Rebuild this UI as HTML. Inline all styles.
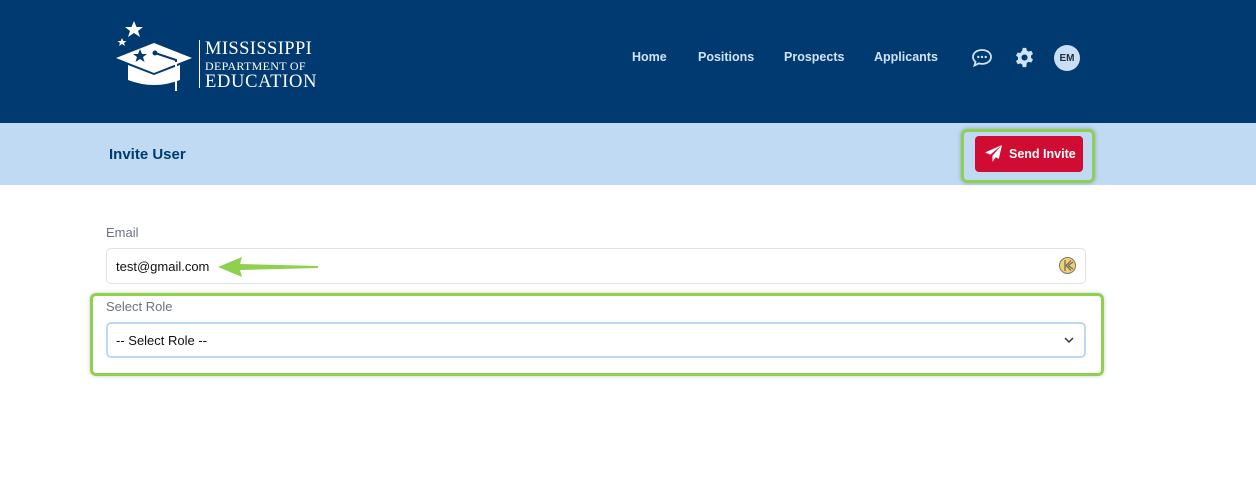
<!DOCTYPE html>
<html><head><meta charset="utf-8"><style>
*{box-sizing:border-box;margin:0;padding:0}
body{width:1256px;height:490px;background:#fff;font-family:"Liberation Sans",sans-serif;position:relative;overflow:hidden}
.hdr{position:absolute;left:0;top:0;width:1256px;height:123px;background:#003a70}
.nav a{position:absolute;top:50px;color:#cfe3f7;font-weight:bold;font-size:12.5px;text-decoration:none}
.sub{position:absolute;left:0;top:123px;width:1256px;height:62px;background:#bfdaf2}
.lbl{position:absolute;color:#6b7280;font-size:13px}
</style></head><body>
<div class="hdr">
<svg style="position:absolute;left:112px;top:18px" width="90" height="75" viewBox="0 0 90 75">
<polygon fill="#fff" points="22,3 24.5,9 31,9 26,13 28,19 22,15 16,19 18,13 13,9 19.5,9"/>
<polygon fill="#fff" points="10,20 11.3,23 14.5,23 12,25 13,28 10,26 7,28 8,25 5.5,23 8.7,23"/>
<polygon fill="#fff" points="4,40 42,25 80,40 42,55"/>
<path fill="#fff" d="M16,47 L16,62 Q42,72 68,62 L68,47 L42,57 Z"/>
<polygon fill="#003a70" points="28,31 30,36 35,36 31,39 32.5,44 28,41 23.5,44 25,39 21,36 26,36"/>
<path d="M43,35 L64,42 L64,73" stroke="#003a70" stroke-width="2" fill="none"/>
<path d="M64,44 L64,73" stroke="#fff" stroke-width="2"/>
<circle cx="43" cy="35" r="2.5" fill="#003a70"/>
</svg>
<div style="position:absolute;left:199px;top:40px;width:1px;height:48px;background:#fff"></div>
<div style="position:absolute;left:205px;top:40px;color:#fff;font-family:'Liberation Serif',serif;line-height:1">
<div style="font-size:18.5px;letter-spacing:0.4px">MISSISSIPPI</div>
<div style="font-size:12px;margin-top:1px;letter-spacing:0.3px">DEPARTMENT OF</div>
<div style="font-size:18.5px;margin-top:1px;letter-spacing:0.7px">EDUCATION</div>
</div>
<div class="nav"><a style="left:632px">Home</a><a style="left:698px">Positions</a><a style="left:784px">Prospects</a><a style="left:874px">Applicants</a></div>
<svg style="position:absolute;left:971px;top:48px" width="22" height="20" viewBox="0 0 22 20"><path d="M11,2 C5.5,2 2,5.3 2,9 C2,11 3,12.6 4.5,13.8 L3.5,17.5 L7.8,15.4 C8.8,15.7 9.9,15.9 11,15.9 C16.5,15.9 20,12.7 20,9 C20,5.3 16.5,2 11,2 Z" fill="none" stroke="#cfe3f7" stroke-width="1.8"/><circle cx="7.3" cy="9" r="1.2" fill="#cfe3f7"/><circle cx="11" cy="9" r="1.2" fill="#cfe3f7"/><circle cx="14.7" cy="9" r="1.2" fill="#cfe3f7"/></svg>
<svg style="position:absolute;left:1014px;top:47px" width="21" height="21" viewBox="0 0 24 24"><path fill="#cfe3f7" fill-rule="evenodd" d="M10,1 h4 l0.6,3 a8,8 0 0 1 2.2,1.3 l2.9-1 2,3.5-2.3,2 a8,8 0 0 1 0,2.5 l2.3,2-2,3.5-2.9-1 a8,8 0 0 1-2.2,1.3 L14,23 h-4 l-0.6-3 a8,8 0 0 1-2.2-1.3 l-2.9,1-2-3.5 2.3-2 a8,8 0 0 1 0-2.5 l-2.3-2 2-3.5 2.9,1 A8,8 0 0 1 9.4,4 Z M12,8.5 a3.5,3.5 0 1 0 0.01,0 Z"/></svg>
<div style="position:absolute;left:1054px;top:45px;width:26px;height:26px;border-radius:50%;background:#c8dff5;color:#1f2d3d;font-size:10px;font-weight:bold;text-align:center;line-height:27px">EM</div>
</div>
<div class="sub">
<div style="position:absolute;left:109px;top:23px;color:#003a70;font-weight:bold;font-size:15px">Invite User</div>
<div style="position:absolute;left:961px;top:6px;width:134px;height:54px;border:3px solid #8fd14f;border-radius:6px;box-shadow:0 0 4px rgba(0,0,0,.25)"></div>
<div style="position:absolute;left:975px;top:13px;width:108px;height:36px;background:#d00c33;border-radius:4px;color:#fff;font-weight:bold;font-size:12.5px;line-height:36px;padding-left:34px">Send Invite</div>
<svg style="position:absolute;left:985px;top:22px" width="17" height="17" viewBox="0 0 16 16"><path fill="#fff" d="M16,0 L0,7 L5,9 L16,0 L7,10 L7,16 L10,11.5 L13,13 Z"/></svg>
</div>
<div class="lbl" style="left:106px;top:225px">Email</div>
<div style="position:absolute;left:106px;top:248px;width:980px;height:36px;border:1px solid #dfe2e6;border-radius:5px"></div>
<div style="position:absolute;left:116px;top:259px;font-size:13px;color:#111">test@gmail.com</div>
<svg style="position:absolute;left:216px;top:255px" width="104" height="24" viewBox="0 0 104 24"><path d="M2,12 L26,2 L24,9 L102,11 L102,13 L24,15 L26,22 Z" fill="#8fd14f"/></svg>
<svg style="position:absolute;left:1059px;top:257px" width="17" height="17" viewBox="0 0 17 17"><circle cx="8.5" cy="8.5" r="8" fill="#f2d06b" stroke="#777" stroke-width="1"/><path d="M6,3 V14 M7,8.5 L12,3.5 M7,8.5 L12,13.5 M9,8.5 L14,5 M9,8.5 L14,12" stroke="#666" stroke-width="1.2"/></svg>
<div style="position:absolute;left:90px;top:293px;width:1014px;height:83px;border:3px solid #8fd14f;border-radius:6px;box-shadow:0 0 4px rgba(0,0,0,.2)"></div>
<div class="lbl" style="left:106px;top:299px">Select Role</div>
<div style="position:absolute;left:106px;top:322px;width:980px;height:36px;border:2px solid #bcd9f4;border-radius:5px;background:#fff"></div>
<div style="position:absolute;left:116px;top:333px;font-size:13px;color:#111">-- Select Role --</div>
<svg style="position:absolute;left:1063px;top:336px" width="12" height="8" viewBox="0 0 12 8"><path d="M2,2 L6,6 L10,2" stroke="#333" stroke-width="1.5" fill="none"/></svg>
</body></html>
